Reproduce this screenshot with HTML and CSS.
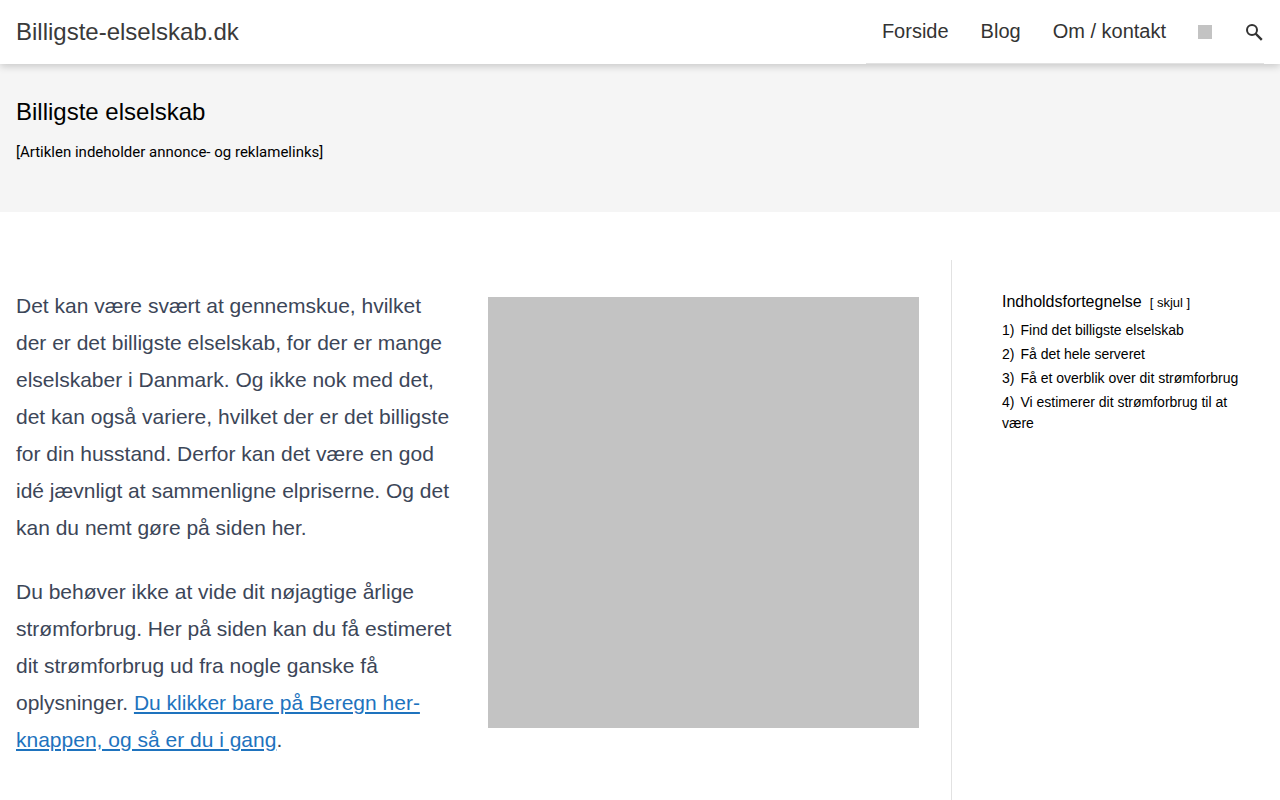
FILE: index.html
```html
<!DOCTYPE html>
<html lang="da">
<head>
  <meta charset="UTF-8">
  <meta name="viewport" content="width=device-width, initial-scale=1">
  <title>Billigste elselskab</title>
  <link rel="stylesheet" href="styles.css">
</head>
<body>

  <header class="site-header">
    <a class="site-title" href="#">Billigste-elselskab.dk</a>
    <nav class="main-nav">
      <a href="#">Forside</a>
      <a href="#">Blog</a>
      <a href="#">Om / kontakt</a>
      <a href="#" aria-label="Sprog"><span class="flag"></span></a>
      <button class="search-toggle" type="button" aria-label="Søg">
        <svg width="20" height="20" viewBox="0 0 20 20" fill="none" stroke="currentColor" stroke-width="2">
          <circle cx="8" cy="8" r="5"/>
          <path d="M11.5 11.5L17.8 17.8" stroke-width="2.4"/>
        </svg>
      </button>
    </nav>
  </header>

  <section class="hero">
    <h1>Billigste elselskab</h1>
    <p>[Artiklen indeholder annonce- og reklamelinks]</p>
  </section>

  <div class="page">
    <main class="content">
      <div class="text">
        <p>Det kan være svært at gennemskue, hvilket der er det billigste elselskab, for der er mange elselskaber i Danmark. Og ikke nok med det, det kan også variere, hvilket der er det billigste for din husstand. Derfor kan det være en god idé jævnligt at sammenligne elpriserne. Og det kan du nemt gøre på siden her.</p>
        <p>Du behøver ikke at vide dit nøjagtige årlige strømforbrug. Her på siden kan du få estimeret dit strømforbrug ud fra nogle ganske få oplysninger. <a href="#">Du klikker bare på Beregn her-knappen, og så er du i gang</a>.</p>
      </div>
      <div class="picture"></div>
    </main>

    <aside class="sidebar">
      <div class="toc-head">
        <h2>Indholdsfortegnelse</h2>
        <span class="toc-toggle">[ <a href="#">skjul</a> ]</span>
      </div>
      <ol class="toc">
        <li><a href="#">Find det billigste elselskab</a></li>
        <li><a href="#">Få det hele serveret</a></li>
        <li><a href="#">Få et overblik over dit strømforbrug</a></li>
        <li><a href="#">Vi estimerer dit strømforbrug til at være</a></li>
      </ol>
    </aside>
  </div>

</body>
</html>
```
FILE: styles.css
```css
* { box-sizing: border-box; }
body { margin: 0; font-family: "Liberation Sans", Arial, sans-serif; color: #000; background: #fff; }
h1, h2, p, ol { margin: 0; font-weight: normal; }

.site-header { position: relative; display: flex; justify-content: space-between; height: 64px; padding: 0 16px; background: #fff; box-shadow: 0 2px 8px rgba(0, 0, 0, 0.2); }
.site-title { font-size: 24px; line-height: 64px; color: #3a3a3a; text-decoration: none; }
.main-nav { display: flex; border-bottom: 1px solid #e2e2e2; }
.main-nav a { display: flex; align-items: center; padding: 0 16px; font-size: 20px; color: #333; text-decoration: none; }
.flag { width: 14px; height: 14px; background: #c3c3c3; }
.search-toggle { display: flex; align-items: center; padding: 0 0 0 16px; border: 0; background: none; color: #333; }

.hero { padding: 32px 16px 44px; background: #f5f5f5; }
.hero h1 { font-size: 24px; line-height: 32px; }
.hero p { margin-top: 8px; font-family: Roboto, "Liberation Sans", sans-serif; font-size: 15px; line-height: 32px; }

.page { display: grid; grid-template-columns: 1fr 313px; gap: 32px; padding: 48px 16px 0; }
.content { display: grid; grid-template-columns: 437fr 431fr; gap: 35px; align-items: start; padding-top: 27px; }
.text p { margin-bottom: 27px; font-size: 21px; line-height: 37px; color: #3c4658; }
.text a { color: #1e73be; text-underline-offset: 2px; text-decoration-thickness: 2px; }
.picture { margin-top: 10px; aspect-ratio: 1; background: #c3c3c3; }

.sidebar { min-height: 540px; padding: 30px 8px 0 50px; border-left: 1px solid #e2e2e2; }
.toc-head { display: flex; align-items: baseline; gap: 8px; }
.toc-head h2 { font-size: 16px; line-height: 24px; }
.toc-toggle { font-size: 13px; }
.sidebar a { color: #000; text-decoration: none; }
.toc { padding: 0; margin-top: 6px; list-style: none; counter-reset: toc; font-size: 14px; line-height: 21px; }
.toc li { margin-bottom: 3px; counter-increment: toc; }
.toc li::before { content: counter(toc) ")"; margin-right: 6px; }
```
